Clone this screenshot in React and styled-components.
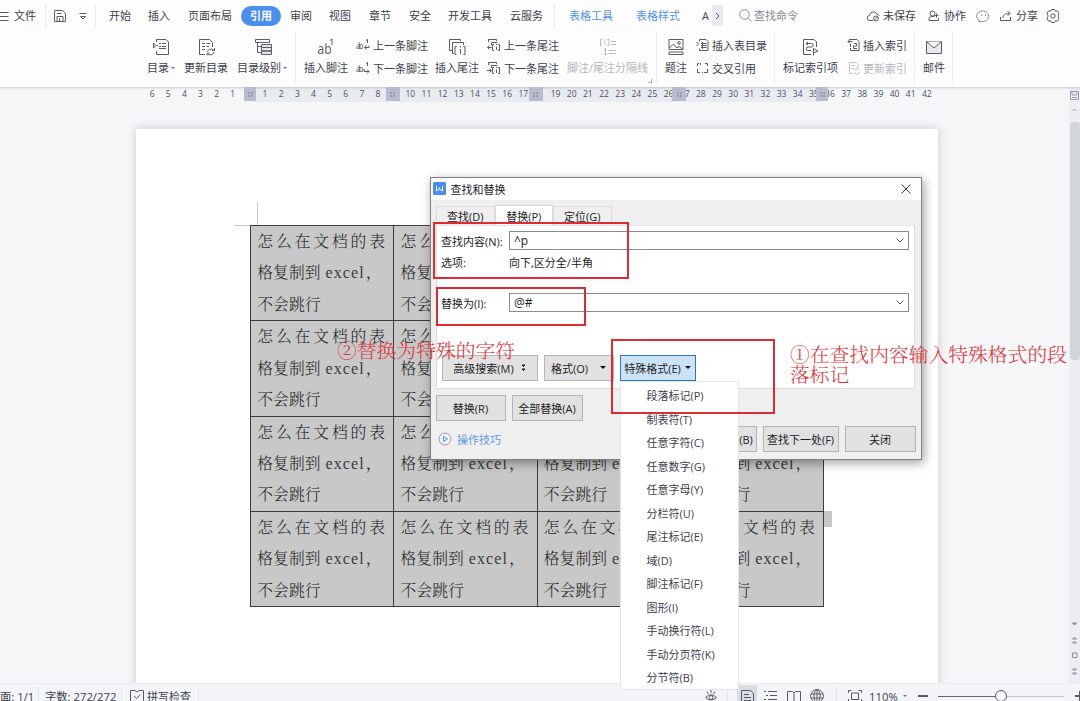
import React from "react";
import styled, { createGlobalStyle, css } from "styled-components";

const GlobalStyle = createGlobalStyle`
  * { box-sizing: border-box; }
  body {
    margin: 0;
    font-family: "Open Sans", "Noto Sans CJK SC", sans-serif;
    font-size: 11px;
    color: #3c414b;
  }
`;

const Screen = styled.div`
  position: relative;
  width: 1080px;
  height: 701px;
  overflow: hidden;
  display: flex;
  flex-direction: column;
  background: #f4f6f8;
`;

/* ---- menu bar ---- */
const MenuBar = styled.div`
  height: 31px;
  flex: none;
  display: flex;
  align-items: center;
  background: #fdfdfe;
  white-space: nowrap;
`;
const MenuItem = styled.span`
  flex: none;
  margin-left: ${(p) => p.$gap || 0}px;
  line-height: 16px;
  color: ${(p) => p.$color || "#3c414b"};
`;
const ActiveTab = styled.span`
  flex: none;
  margin-left: 9px;
  width: 40px;
  height: 20px;
  line-height: 19px;
  border-radius: 10px;
  background: #4a8ef0;
  color: white;
  font-weight: 700;
  text-align: center;
`;
const MenuDivider = styled.i`
  flex: none;
  width: 1px;
  height: 22px;
  margin-left: ${(p) => p.$gap || 0}px;
  background: #e9eaee;
`;
const MoreTabs = styled.span`
  flex: none;
  width: 11px;
  height: 21px;
  margin-left: 3px;
  display: flex;
  align-items: center;
  justify-content: center;
  background: #e8eaf0;
`;
const Svg = styled.svg`
  flex: none;
  display: block;
  overflow: visible;
  margin-left: ${(p) => p.$gap || 0}px;
  fill: none;
  stroke: ${(p) => p.$color || "#565b66"};
  stroke-width: ${(p) => p.$stroke || 1};
  text { font-family: "Open Sans", sans-serif; stroke: none; fill: ${(p) => p.$color || "#565b66"}; }
`;

/* ---- ribbon ---- */
const Ribbon = styled.div`
  position: relative;
  z-index: 1;
  height: 56px;
  flex: none;
  display: flex;
  background: #fdfdfe;
  box-shadow: 0 1px 2px rgba(60, 65, 80, 0.22);
  white-space: nowrap;
`;
const Tool = styled.div`
  flex: none;
  width: ${(p) => p.$w}px;
  margin-left: ${(p) => p.$gap}px;
  display: flex;
  flex-direction: column;
  align-items: center;
  padding-top: 7px;
  color: ${(p) => (p.$off ? "#b4b5ba" : "#3c414b")};
`;
const ToolLabel = styled.div`
  height: 16px;
  margin-top: 4px;
  width: 100%;
  line-height: 16px;
  display: flex;
  align-items: center;
`;
const ToolPair = styled.div`
  flex: none;
  width: ${(p) => p.$w}px;
  margin-left: ${(p) => p.$gap}px;
  padding-top: 6px;
  display: flex;
  flex-direction: column;
  gap: 7px;
`;
const SmallTool = styled.div`
  height: 16px;
  display: flex;
  align-items: center;
  gap: 3px;
  color: ${(p) => (p.$off ? "#b4b5ba" : "#3c414b")};
`;
const RibbonDivider = styled.i`
  flex: none;
  width: 1px;
  height: 52px;
  margin: 1px 0 0 ${(p) => p.$gap}px;
  background: #eeeff1;
`;
const Launcher = styled.i`
  flex: none;
  align-self: flex-end;
  width: 4px;
  height: 4px;
  margin: 0 0 4px 0;
  border: solid #a9acb5;
  border-width: 0 1px 1px 0;
`;
const Caret = styled.i`
  flex: none;
  width: 0;
  height: 0;
  margin-left: ${(p) => p.$gap || 2}px;
  border: solid transparent;
  border-width: ${(p) => p.$size || 2}px ${(p) => p.$size || 2}px 0;
  border-top-color: ${(p) => p.$color || "#6c7079"};
`;

/* ---- work area ---- */
const Work = styled.div`
  position: relative;
  flex: 1;
  display: flex;
  min-height: 0;
`;
const Canvas = styled.div`
  width: 1069px;
  flex: none;
  overflow: hidden;
`;
const Ruler = styled.div`
  height: 15px;
  padding-left: 144px;
  display: flex;
  background: linear-gradient(90deg, #f4f6f8 249px, #e9ebf2 249px, #e9ebf2 822px, #f4f6f8 822px);
`;
const Tick = styled.span`
  flex: none;
  width: 16.15px;
  line-height: 14px;
  font-size: 8.5px;
  text-align: center;
  color: #4b505c;
`;
const ColumnMark = styled.i`
  position: absolute;
  z-index: 1;
  top: 0;
  left: ${(p) => p.$x}px;
  width: ${(p) => p.$w}px;
  height: 14px;
  display: flex;
  align-items: center;
  justify-content: center;
  background: #b9bccf;
`;
const Page = styled.div`
  width: 802px;
  height: 570px;
  margin: 27px 0 0 136px;
  padding: 73px 0 0 98px;
  background: white;
  box-shadow: 0 0 9px rgba(50, 60, 70, 0.22);
`;
const CropMark = styled.div`
  width: 24px;
  height: 24px;
  border: solid #c6c8ca;
  border-width: 0 1px 1px 0;
`;
const TableRow = styled.div`
  display: flex;
  align-items: flex-start;
`;
const Table = styled.div`
  width: 574px;
  height: 382px;
  margin: -1px 0 0 16px;
  display: grid;
  flex: none;
  grid-template-columns: repeat(4, 1fr);
  grid-template-rows: repeat(4, 1fr);
  gap: 1px;
  padding: 1px;
  background: #3d3d3d;
`;
const Cell = styled.div`
  min-height: 0;
  padding: 0 0 0 6.3px;
  background: #c8c8c8;
  color: #1e1e1e;
  font-family: "Noto Serif CJK SC", "Noto Sans CJK SC", serif;
  font-weight: 300;
  font-size: 15.8px;
  line-height: 30.5px;
  white-space: nowrap;
`;
const Line = styled.div`
  height: 31.4px;
  letter-spacing: ${(p) => (p.$spread ? 2.85 : 0)}px;
`;
const Latin = styled.span`
  margin: 0 1px 0 5px;
  font-family: "Liberation Serif", serif;
  font-size: 16px;
  letter-spacing: 1.1px;
  color: #3a3a3a;
`;
const RowEnd = styled.i`
  width: 8px;
  height: 16px;
  margin-top: 285px;
  background: #c8c8c8;
`;
const ScrollBar = styled.div`
  width: 11px;
  display: flex;
  flex-direction: column;
  align-items: center;
  background: #eceef3;
`;
const Thumb = styled.div`
  width: 10px;
  height: 238px;
  margin: 7px 0 257px 1px;
  border-radius: 3px;
  background: #d2d6da;
`;

/* ---- find and replace ---- */
const Dialog = styled.div`
  position: absolute;
  left: 430px;
  top: 177px;
  width: 492px;
  height: 283px;
  z-index: 2;
  display: flex;
  flex-direction: column;
  border: 1px solid #808080;
  background: #efefef;
  box-shadow: 2px 3px 10px rgba(0, 0, 0, 0.38);
  color: #1d1d1d;
  white-space: nowrap;
`;
const TitleBar = styled.div`
  height: 22px;
  flex: none;
  display: flex;
  align-items: center;
  padding: 0 10px 1px 2px;
  background: white;
`;
const Title = styled.span`
  flex: 1;
  margin-left: 4.5px;
`;
const Tabs = styled.div`
  height: 25px;
  flex: none;
  display: flex;
  align-items: flex-end;
  padding-left: 5px;
`;
const DialogTab = styled.div`
  width: 58.5px;
  height: ${(p) => (p.$active ? 20 : 19)}px;
  line-height: ${(p) => (p.$active ? 21 : 20)}px;
  text-align: center;
  border: 1px solid #dcdcdc;
  border-bottom: 0;
  background: ${(p) => (p.$active ? "white" : "#efefef")};
`;
const Panel = styled.div`
  width: 479px;
  height: 164px;
  flex: none;
  margin-left: 5px;
  padding: 5px 5px 0 4px;
  border: 1px solid #dcdcdc;
  border-top-color: #e6e6e6;
  background: white;
`;
const Field = styled.div`
  height: ${(p) => p.$h || 19}px;
  margin-top: ${(p) => p.$gap || 0}px;
  display: flex;
  align-items: center;
`;
const FieldLabel = styled.span`
  width: 68px;
  flex: none;
`;
const Combo = styled.div`
  width: 401px;
  height: 19px;
  display: flex;
  align-items: center;
  justify-content: space-between;
  padding: 0 4px;
  border: 1px solid #8c8c8c;
  font-size: 12px;
`;
const Buttons = styled.div`
  display: flex;
  align-items: center;
  gap: 6px;
  margin: ${(p) => p.$margin};
`;
const Button = styled.button`
  width: ${(p) => p.$w}px;
  height: 26px;
  flex: none;
  display: flex;
  align-items: center;
  justify-content: center;
  padding: 0 1px 1px 0;
  border: 1px solid #b4b4b4;
  background: #e1e1e1;
  color: #1d1d1d;
  font: inherit;
  ${(p) =>
    p.$pressed &&
    css`
      border-color: #2f76b5;
      background: #cbe3f7;
    `}
`;
const Tips = styled.span`
  flex: 1;
  display: flex;
  align-items: center;
  gap: 5px;
  color: #5b98ef;
`;
const Menu = styled.div`
  position: absolute;
  z-index: 3;
  left: 620px;
  top: 381px;
  width: 119px;
  height: 309px;
  padding: 3px 0 0 25.5px;
  border: 1px solid #e4e6e9;
  background: white;
`;
const MenuEntry = styled.div`
  height: 23.5px;
  line-height: 21px;
  white-space: nowrap;
`;

/* ---- annotations ---- */
const Frame = styled.div`
  position: absolute;
  z-index: 4;
  left: ${(p) => p.$x}px;
  top: ${(p) => p.$y}px;
  width: ${(p) => p.$w}px;
  height: ${(p) => p.$h}px;
  border: 2px solid #dc2b33;
`;
const Note = styled.div`
  position: absolute;
  z-index: 4;
  left: ${(p) => p.$x}px;
  top: ${(p) => p.$y}px;
  width: 282px;
  font-family: "Noto Serif CJK SC", "Noto Sans CJK SC", serif;
  font-weight: 300;
  font-size: 19.8px;
  line-height: 20px;
  color: #dc3338;
`;

/* ---- status bar ---- */
const StatusBar = styled.div`
  height: 18px;
  flex: none;
  border-top: 1px solid #e9ebed;
  background: #f3f5f9;
`;
const StatusRow = styled.div`
  height: 24px;
  display: flex;
  align-items: center;
  white-space: nowrap;
  & > * { flex: none; }
`;
const StatusText = styled.span`
  width: ${(p) => p.$w}px;
  margin-left: ${(p) => p.$gap || 0}px;
  font-size: ${(p) => p.$size || 11.3}px;
`;
const StatusDivider = styled.i`
  width: 1px;
  height: 18px;
  margin-left: ${(p) => p.$gap || 0}px;
  background: #e2e5ea;
`;
const ActiveView = styled.span`
  width: 20px;
  height: 22px;
  margin-left: 9px;
  display: flex;
  align-items: center;
  justify-content: center;
  background: #d8dce4;
`;
const Track = styled.i`
  width: 57px;
  height: 1px;
  margin-left: ${(p) => p.$gap || 0}px;
  background: ${(p) => p.$color};
`;
const Knob = styled.i`
  width: 12px;
  height: 12px;
  border: 1px solid #555a63;
  border-radius: 50%;
`;

const Icon = ({ w = 16, h = 16, children, ...rest }) => (
  <Svg width={w} height={h} viewBox={`0 0 ${w} ${h}`} {...rest}>
    {children}
  </Svg>
);

const TocIcon = () => (
  <Icon w={18} h={18}>
    <path d="M3.500 4V1.500H13L15.500 4V16.500H3.500V13M0.500 5L3 7.500L0.500 10ZM3.500 7.500H5M6 5.500H8M9 5.500H13M6 8.500H8M9 8.500H13M6 10.500H13" />
  </Icon>
);
const RefreshTocIcon = () => (
  <Icon w={18} h={18}>
    <path d="M8 16.500H2.500V1.500H12.500L15.500 4.500V9M5 5.500H8M9.500 5.500H13M5 8.500H8M9.500 8.500H12M5 11.500H8" />
    <path d="M10.500 13.500A3.500 3 0 0 1 16.500 12M17.500 10V12.500H15M17 14A3.500 3 0 0 1 11 16M10 17.500V15.200H12.500" />
  </Icon>
);
const LevelIcon = () => (
  <Icon w={18} h={18}>
    <path d="M1.500 1.500H15.500V4.500H1.500ZM3.500 5V14.500H7M3.500 8.500H7" />
    <path fill="#e4e5ea" d="M7.500 6.500H17.500V9.500H7.500ZM7.500 9.500H17.500V13H7.500ZM7.500 13H17.500V16.500H7.500Z" />
  </Icon>
);
const FootnoteIcon = () => (
  <Icon w={18} h={18}>
    <text x="0.500" y="15.500" fontSize="14" textLength="14" lengthAdjust="spacingAndGlyphs">ab</text>
    <path d="M13 2.500L15 1V7" />
  </Icon>
);
const NoteStepIcon = ({ next }) => (
  <Icon w={14} h={14}>
    <text x="0" y="11" fontSize="9" textLength="7.500">ab</text>
    <path d="M10 2.500L11.500 1.500V5" />
    <path d={next ? "M8 8V10.500H13M11 8.500L13 10.500L11 12.500" : "M13 7.500V9.500H9M10.500 7.500L8.500 9.500L10.500 11.500"} />
  </Icon>
);
const EndnoteIcon = () => (
  <Icon w={18} h={18}>
    <path d="M4 12.500H1.500V1.500H12.500V3M6 15.500H4.500V4.500H15.500V7M8.500 8.500H7V16.500H8.500M15.500 8.500H17V16.500H15.500M12.500 11V16M12.500 8V9.500" />
  </Icon>
);
const EndStepIcon = ({ next }) => (
  <Icon w={14} h={14}>
    <path d="M1.500 4V1.500H9.500V3M10.500 4.500H4.500V7M7 6.500H5.500V12.500H7M11 6.500H12.500V12.500H11M9.500 8.500V12M9.500 6V7" />
    <path d={next ? "M0 9.500H4M2.500 7.500L4.500 9.500L2.500 11.500" : "M4.500 9.500H0.500M2.500 7.500L0.500 9.500L2.500 11.500"} />
  </Icon>
);
const SeparatorIcon = () => (
  <Icon w={18} h={18} $color="#b9babf">
    <path d="M3 1.500H1.500V7.500H3M8.500 1.500H10V7.500H8.500M6 4V7M6 1.500V3M12 3.500H17M12 6.500H17M5 11.500L6.500 10.500V16.500M5 16.500H8M9.500 12.500H17M9.500 15.500H17" />
  </Icon>
);
const CaptionIcon = () => (
  <Icon w={18} h={18}>
    <path d="M2 1.500H16V11.500H2ZM2 14H16V16.500H2ZM2.500 10L6.500 6L10 10L12 8.500L15.500 11" />
    <circle cx="12" cy="5" r="1.300" />
  </Icon>
);
const TableListIcon = () => (
  <Icon w={13} h={14}>
    <path d="M3.500 3.500V1.500H10L12 3.500V12.500H3.500V10.500M0.500 4L2.500 6L0.500 8M5 5.500H10.500M5 7.500H10.500M5 9.500H10.500M6.500 4V11" />
  </Icon>
);
const CrossRefIcon = () => (
  <Icon w={13} h={14}>
    <path d="M1.500 5V2.500H3M4.500 2V4M9 2.500H11.500V5M1.500 8V11.500H4M11.500 8V11.500H8M6 11.500H7" />
  </Icon>
);
const MarkIndexIcon = () => (
  <Icon w={18} h={18}>
    <path d="M9 16.500H1.500V1.500H12L14.500 4V9M4 5.500H9.500A1.500 1.500 0 0 1 9.500 9H6A1.500 1.500 0 0 0 6 12.500H9M6 4L4 5.500L6 7" />
    <path d="M11.500 17.500V10.500L16 13L11.500 15" />
  </Icon>
);
const InsertIndexIcon = () => (
  <Icon w={12} h={14}>
    <path d="M2.500 6V9M1 1.500H9L11 3.500V12.500H2.500V10M0 3.500H4.500M2 1.500L0 3.500L2 5.500M6 5.500H8.500V8H5.500V10.500H9" />
  </Icon>
);
const UpdateIndexIcon = () => (
  <Icon w={12} h={14} $color="#c3c4c9">
    <path d="M5 12.500H1.500V1.500H8L10 3.500V7M3.500 4.500H7M3.500 7.500H6M7 9.500A2 2 0 0 1 11 9.500M11 11A2 2 0 0 1 7 11.500" />
  </Icon>
);
const MailIcon = () => (
  <Icon w={18} h={18}>
    <path fill="#e8e9ed" d="M1.500 3.500H16.500V15.500H1.500Z" />
    <path fill="white" d="M1.500 3.500L9 10L16.500 3.500" />
  </Icon>
);

const rulerTicks = [6, 5, 4, 3, 2, 1, 0].concat(Array.from({ length: 42 }, (_, i) => i + 1));
const columnMarks = [
  [244, 12],
  [385.5, 14.5],
  [528.5, 14.5],
  [672, 14],
  [816, 12],
];
const specials = [
  "段落标记(P)",
  "制表符(T)",
  "任意字符(C)",
  "任意数字(G)",
  "任意字母(Y)",
  "分栏符(U)",
  "尾注标记(E)",
  "域(D)",
  "脚注标记(F)",
  "图形(I)",
  "手动换行符(L)",
  "手动分页符(K)",
  "分节符(B)",
];

const BigTool = ({ icon, label, w, gap, caret, off }) => (
  <Tool $w={w} $gap={gap} $off={off}>
    {icon}
    <ToolLabel>
      {label}
      {caret && <Caret />}
    </ToolLabel>
  </Tool>
);

const TopMenu = () => (
  <MenuBar>
    <Icon w={9} h={10}><path d="M0 1.500H8.500M0 5.500H8.500M0 9.500H8.500" /></Icon>
    <MenuItem $gap={5}>文件</MenuItem>
    <MenuDivider $gap={9} />
    <Icon w={12} h={12} $gap={8}>
      <path d="M0.500 0.500H8.500L11.500 3.500V11.500H0.500ZM3 3.500H7.500M3 11V6.500H9V11M5.500 8V11" />
    </Icon>
    <Icon w={8} h={8} $gap={13}><path d="M0.500 1.500H7.500M1.500 4.500H6.500L4 7Z" /></Icon>
    <MenuDivider $gap={8} />
    <MenuItem $gap={13}>开始</MenuItem>
    <MenuItem $gap={17}>插入</MenuItem>
    <MenuItem $gap={18}>页面布局</MenuItem>
    <ActiveTab>引用</ActiveTab>
    <MenuItem $gap={9}>审阅</MenuItem>
    <MenuItem $gap={17}>视图</MenuItem>
    <MenuItem $gap={18}>章节</MenuItem>
    <MenuItem $gap={18}>安全</MenuItem>
    <MenuItem $gap={17}>开发工具</MenuItem>
    <MenuItem $gap={18}>云服务</MenuItem>
    <MenuDivider $gap={11} />
    <MenuItem $gap={14} $color="#5093f0">表格工具</MenuItem>
    <MenuItem $gap={23} $color="#5093f0">表格样式</MenuItem>
    <MenuItem $gap={22}>A</MenuItem>
    <MoreTabs>
      <Icon w={5} h={8}><path d="M1 1L4 4L1 7" /></Icon>
    </MoreTabs>
    <Icon w={13} h={13} $gap={16} $color="#8a8e97">
      <circle cx="5.5" cy="5.5" r="4.800" /><path d="M9 9L12.500 12.500" />
    </Icon>
    <MenuItem $gap={2} $color="#868b96">查找命令</MenuItem>
    <Icon w={13} h={12} $gap={69}>
      <path d="M6 10.500H3A2.500 2.500 0 0 1 2.500 5.500A4 4 0 0 1 10 4A3 3 0 0 1 12 6" />
      <circle cx="9" cy="8.500" r="2.500" /><path d="M7.500 10L10.500 7" />
    </Icon>
    <MenuItem $gap={3}>未保存</MenuItem>
    <Icon w={12} h={12} $gap={12}>
      <circle cx="4.500" cy="3.500" r="2.500" /><path d="M1 10.500V9C1 7.500 2 6.500 4 6.500H6.500M1 10.500H10.500V8M6.500 5.500H10.500M8.500 3.500V7.500" />
    </Icon>
    <MenuItem $gap={4}>协作</MenuItem>
    <Icon w={13} h={12} $gap={11} $color="#8b8f98">
      <path d="M3 11A6 5.300 0 1 1 6.500 11.500H1.500ZM4.500 4.500V6M8.500 4.500V6" />
    </Icon>
    <Icon w={12} h={12} $gap={10}>
      <path d="M0.500 7V10.500H10.500V7M3 8C3 5 5 3.500 9.500 3.500M7.500 1L10 3.500L7.500 6" />
    </Icon>
    <MenuItem $gap={4}>分享</MenuItem>
    <Icon w={14} h={14} $gap={8}>
      <path d="M5.500 0.500H8.500L9.300 2.200L11.500 1.900L13 4.500L12 6.500V7.500L13 9.500L11.500 12.100L9.300 11.800L8.500 13.500H5.500L4.700 11.800L2.500 12.100L1 9.500L2 7.500V6.500L1 4.500L2.500 1.900L4.700 2.200Z" />
      <circle cx="7" cy="7" r="2.200" />
    </Icon>
  </MenuBar>
);

const References = () => (
  <Ribbon>
    <BigTool icon={<TocIcon />} label="目录" caret w={29} gap={147} />
    <BigTool icon={<RefreshTocIcon />} label="更新目录" w={44} gap={8} />
    <BigTool icon={<LevelIcon />} label="目录级别" caret w={51} gap={9} />
    <RibbonDivider $gap={7} />
    <BigTool icon={<FootnoteIcon />} label="插入脚注" w={44} gap={8} />
    <ToolPair $w={72} $gap={8}>
      <SmallTool><NoteStepIcon />上一条脚注</SmallTool>
      <SmallTool><NoteStepIcon next />下一条脚注</SmallTool>
    </ToolPair>
    <BigTool icon={<EndnoteIcon />} label="插入尾注" w={44} gap={7} />
    <ToolPair $w={72} $gap={8}>
      <SmallTool><EndStepIcon />上一条尾注</SmallTool>
      <SmallTool><EndStepIcon next />下一条尾注</SmallTool>
    </ToolPair>
    <BigTool icon={<SeparatorIcon />} label="脚注/尾注分隔线" w={81} gap={8} off />
    <Launcher />
    <RibbonDivider $gap={4} />
    <BigTool icon={<CaptionIcon />} label="题注" w={22} gap={8} />
    <ToolPair $w={72} $gap={9}>
      <SmallTool><TableListIcon />插入表目录</SmallTool>
      <SmallTool><CrossRefIcon />交叉引用</SmallTool>
    </ToolPair>
    <RibbonDivider $gap={6} />
    <BigTool icon={<MarkIndexIcon />} label="标记索引项" w={55} gap={8} />
    <ToolPair $w={60} $gap={10}>
      <SmallTool><InsertIndexIcon />插入索引</SmallTool>
      <SmallTool $off><UpdateIndexIcon />更新索引</SmallTool>
    </ToolPair>
    <RibbonDivider $gap={6} />
    <BigTool icon={<MailIcon />} label="邮件" w={22} gap={8} />
    <RibbonDivider $gap={7} />
  </Ribbon>
);

const Document = () => (
  <Work>
    <Canvas>
      <Ruler>
        {rulerTicks.map((n, i) => (
          <Tick key={i}>{[0, 9, 18].includes(n) ? "" : n}</Tick>
        ))}
      </Ruler>
      {columnMarks.map(([x, w]) => (
        <ColumnMark key={x} $x={x} $w={w}>
          <Icon w={5} h={5} $color="#777b91"><path d="M0 1H2M3 1H5M0 4H2M3 4H5" /></Icon>
        </ColumnMark>
      ))}
      <Page>
        <CropMark />
        <TableRow>
          <Table>
            {Array.from({ length: 16 }, (_, i) => (
              <Cell key={i}>
                <Line $spread>怎么在文档的表</Line>
                <Line>格复制到<Latin>excel</Latin>，</Line>
                <Line>不会跳行</Line>
              </Cell>
            ))}
          </Table>
          <RowEnd />
        </TableRow>
      </Page>
    </Canvas>
    <ScrollBar>
      <Icon w={9} h={28}>
        <path stroke="#9a9eb5" d="M0.500 4.500H8.500V12.500H0.500ZM2 5V8H7V5M2 10.500H7" />
        <path stroke="#a5a8b5" d="M2.500 24L4.500 22L6.500 24" />
      </Icon>
      <Thumb />
      <Icon w={9} h={62} $color="#8d909c">
        <path fill="#8d909c" d="M2.500 6L4.500 8L6.500 6Z" />
        <path d="M2.500 22L4.500 20L6.500 22ZM2.500 26L4.500 24L6.500 26ZM2.500 36H7V40.500H2.500ZM2.500 52L4.500 54L6.500 52ZM2.500 56L4.500 58L6.500 56Z" />
      </Icon>
    </ScrollBar>
  </Work>
);

const DownArrow = () => (
  <Icon w={8} h={5}><path d="M0.500 0.500L4 4L7.500 0.500" /></Icon>
);

const FindReplace = () => (
  <Dialog>
    <TitleBar>
      <Icon w={13} h={13} $color="white">
        <rect width="13" height="13" rx="1" fill="#4a8ef0" stroke="none" />
        <path d="M3.500 4V9L6.500 7L9.500 9V4M6.500 5.500V7" />
      </Icon>
      <Title>查找和替换</Title>
      <Icon w={10} h={10} $color="#333"><path d="M0.500 0.500L9.500 9.500M9.500 0.500L0.500 9.500" /></Icon>
    </TitleBar>
    <Tabs>
      <DialogTab>查找(D)</DialogTab>
      <DialogTab $active>替换(P)</DialogTab>
      <DialogTab>定位(G)</DialogTab>
    </Tabs>
    <Panel>
      <Field>
        <FieldLabel>查找内容(N):</FieldLabel>
        <Combo>^p<DownArrow /></Combo>
      </Field>
      <Field $h={23}>
        <FieldLabel>选项:</FieldLabel>
        <span>向下,区分全/半角</span>
      </Field>
      <Field $gap={20}>
        <FieldLabel>替换为(I):</FieldLabel>
        <Combo>@#<DownArrow /></Combo>
      </Field>
      <Buttons $margin="43px 0 0 1px">
        <Button $w={96}>
          高级搜索(M)
          <Icon w={5} h={8} $gap={7} $color="#222"><path fill="#222" d="M1 1L2.500 2.500L4 1ZM1 5L2.500 6.500L4 5Z" /></Icon>
        </Button>
        <Button $w={70}>格式(O)<Caret $gap={12} $size={3} $color="#111" /></Button>
        <Button $w={76} $pressed>特殊格式(E)<Caret $gap={4} $size={3} $color="#111" /></Button>
      </Buttons>
    </Panel>
    <Buttons $margin="6px 0 0 5px">
      <Button $w={70}>替换(R)</Button>
      <Button $w={71}>全部替换(A)</Button>
    </Buttons>
    <Buttons $margin="5px 5px 0 7px">
      <Tips>
        <Icon w={14} h={14} $color="#9aa0aa"><circle cx="7" cy="7" r="6" /><path stroke="#5b98ef" d="M5.500 4.500V9.500L9.500 7Z" /></Icon>
        操作技巧
      </Tips>
      <Button $w={76}>查找上一处(B)</Button>
      <Button $w={76}>查找下一处(F)</Button>
      <Button $w={71}>关闭</Button>
    </Buttons>
  </Dialog>
);

const Status = () => (
  <StatusBar>
    <StatusRow>
      <StatusText $w={38}>面: 1/1</StatusText>
      <StatusDivider />
      <StatusText $w={75} $gap={6}>字数: 272/272</StatusText>
      <StatusDivider $gap={1} />
      <Icon w={14} h={14} $gap={8}>
        <path d="M0.500 1.500H5L7 3L9 1.500H13.500V12.500H8.500L7 13.500L5.500 12.500H0.500ZM4 7L6.500 9.500L10.500 5.500" />
      </Icon>
      <StatusText $w={46} $gap={3} $size={11}>拼写检查</StatusText>
      <StatusDivider $gap={5} />
      <Icon w={12} h={14} $gap={506}>
        <path d="M0.500 8.500Q6 3 11.500 8.500Q6 13.500 0.500 8.500ZM6 1V4M2 2.500L3.500 5M10 2.500L8.500 5" />
        <circle cx="6" cy="8.500" r="2" />
      </Icon>
      <StatusDivider $gap={10} />
      <ActiveView>
        <Icon w={13} h={14}><path d="M0.500 1.500H9.500L12.500 4.500V13.500H0.500ZM3 5.500H8M3 8.500H10M3 11.500H10" /></Icon>
      </ActiveView>
      <Icon w={13} h={12} $gap={7}><path d="M0 1.500H2M4 1.500H13M2 5.500H4M6 5.500H13M0 9.500H2M4 9.500H13" /></Icon>
      <Icon w={14} h={13} $gap={10}><path d="M0.500 1.500H5.500L7 3L8.500 1.500H13.500V12H8.500L7 13L5.500 12H0.500ZM7 3V13" /></Icon>
      <Icon w={14} h={14} $gap={9}>
        <circle cx="7" cy="7" r="6.400" /><ellipse cx="7" cy="7" rx="3" ry="6.400" /><path d="M1 5H13M1 9H13M7 0.500V13.500" />
      </Icon>
      <StatusDivider $gap={12} />
      <Icon w={14} h={14} $gap={11}>
        <path d="M0.500 4V1.500H3.500M10.500 1.500H13.500V4M0.500 10V13H3.500M10.500 13H13.500V10M3.500 4H10.500V10.500H3.500Z" />
      </Icon>
      <StatusText $w={30} $gap={7}>110%</StatusText>
      <Caret $gap={4} />
      <Icon w={10} h={4} $gap={11} $stroke={2}><path d="M0 2H10" /></Icon>
      <Track $gap={10} $color="#63676f" />
      <Knob />
      <Track $color="#c5c8cf" />
      <Icon w={10} h={10} $gap={11} $stroke={2}><path d="M0 5H10M5 0V10" /></Icon>
    </StatusRow>
  </StatusBar>
);

const App = () => {
  return (
    <Screen>
      <GlobalStyle />
      <TopMenu />
      <References />
      <Document />
      <Status />
      <FindReplace />
      <Menu>
        {specials.map((label) => (
          <MenuEntry key={label}>{label}</MenuEntry>
        ))}
      </Menu>
      <Frame $x={433} $y={222} $w={196} $h={57} />
      <Frame $x={436} $y={287} $w={150} $h={39} />
      <Frame $x={611} $y={339} $w={164} $h={75} />
      <Note $x={337} $y={340}>②替换为特殊的字符</Note>
      <Note $x={790} $y={344}>①在查找内容输入特殊格式的段落标记</Note>
    </Screen>
  );
};

export default App;
